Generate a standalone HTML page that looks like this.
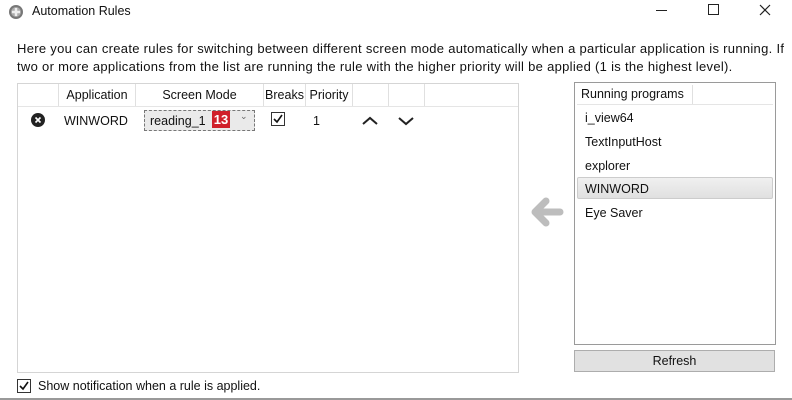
<!DOCTYPE html><html><head><meta charset="utf-8"><style>
body{margin:0;width:792px;height:400px;background:#fff;font-family:"Liberation Sans",sans-serif;font-size:12px;color:#111;position:relative;overflow:hidden}
.a{position:absolute}
.hd{position:absolute;top:0;height:22px;line-height:22px;border-right:1px solid #e0e0e0;text-align:center;font-size:12.5px}
</style></head><body>
<svg class="a" style="left:8px;top:4px" width="16" height="16" viewBox="0 0 16 16"><circle cx="8" cy="8" r="7" fill="#777"/><circle cx="8" cy="8" r="5" fill="#aaa"/><path d="M8 4v8M4 8h8" stroke="#eee" stroke-width="2.5"/></svg>
<div class="a" style="left:32px;top:4px;font-size:12.5px">Automation Rules</div>
<div class="a" style="left:656px;top:10px;width:11px;height:1px;background:#222"></div>
<div class="a" style="left:708px;top:4px;width:9px;height:9px;border:1px solid #222"></div>
<svg class="a" style="left:759px;top:4px" width="12" height="12"><path d="M1 1L11 11M11 1L1 11" stroke="#222" stroke-width="1.2"/></svg>
<div class="a" style="left:17px;top:40px;width:775px;line-height:18px;font-size:13px;letter-spacing:0.3px">Here you can create rules for switching between different screen mode automatically when a particular application is running. If two or more applications from the list are running the rule with the higher priority will be applied (1 is the highest level).</div>
<div class="a" style="left:17px;top:83px;width:500px;height:288px;border:1px solid #d5d5d5;font-size:12.5px">
 <div class="a" style="left:0;top:0;width:500px;height:22px;border-bottom:1px solid #e5e5e5"></div>
 <div class="hd" style="left:0;width:40px"></div>
 <div class="hd" style="left:41px;width:76px">Application</div>
 <div class="hd" style="left:118px;width:127px">Screen Mode</div>
 <div class="hd" style="left:246px;width:41px">Breaks</div>
 <div class="hd" style="left:288px;width:46px">Priority</div>
 <div class="hd" style="left:335px;width:35px"></div>
 <div class="hd" style="left:371px;width:35px"></div>
 <svg class="a" style="left:13px;top:29px" width="14" height="14"><circle cx="7" cy="7" r="7" fill="#222"/><path d="M4.5 4.5l5 5M9.5 4.5l-5 5" stroke="#fff" stroke-width="1.6"/></svg>
 <div class="a" style="left:46px;top:30px">WINWORD</div>
 <div class="a" style="left:126px;top:26px;width:109px;height:19px;border:1px dashed #777;background:#eaeaea"></div>
 <div class="a" style="left:132px;top:30px">reading_1</div>
 <div class="a" style="left:194px;top:27px;width:18px;height:17px;background:#d0202a;color:#fff;font-weight:bold;font-size:13px;line-height:17px;text-align:center">13</div>
 <div class="a" style="left:222px;top:27px;font-size:9px;color:#666">&#8964;</div>
 <div class="a" style="left:253px;top:28px;width:12px;height:12px;border:1px solid #333;background:#fff"></div>
 <svg class="a" style="left:254px;top:29px" width="12" height="12"><path d="M2 6l3 3 5-7" stroke="#111" stroke-width="1.6" fill="none"/></svg>
 <div class="a" style="left:295px;top:30px">1</div>
 <svg class="a" style="left:344px;top:32px" width="16" height="10"><path d="M1 8l7-6 7 6" stroke="#222" stroke-width="2" fill="none"/></svg>
 <svg class="a" style="left:380px;top:32px" width="16" height="10"><path d="M1 2l7 6 7-6" stroke="#222" stroke-width="2" fill="none"/></svg>
</div>
<svg class="a" style="left:528px;top:195px" width="36" height="34"><path d="M32 17H9M18 6L7 17l11 11" stroke="#bdbdbd" stroke-width="7" fill="none" stroke-linecap="round" stroke-linejoin="round"/></svg>
<div class="a" style="left:574px;top:82px;width:200px;height:261px;border:1px solid #9a9a9a;font-size:12.5px">
 <div class="a" style="left:2px;top:2px;width:196px;height:19px;border-bottom:1px solid #e5e5e5"></div>
 <div class="a" style="left:2px;top:2px;width:116px;height:19px;border-right:1px solid #e0e0e0;line-height:19px;padding-left:4px;box-sizing:border-box">Running programs</div>
 <div class="a" style="left:10px;top:28px">i_view64</div>
 <div class="a" style="left:10px;top:52px">TextInputHost</div>
 <div class="a" style="left:10px;top:76px">explorer</div>
 <div class="a" style="left:2px;top:94px;width:194px;height:20px;border:1px solid #ccc;background:linear-gradient(#f0f0f0,#e0e0e0);border-radius:2px"></div>
 <div class="a" style="left:10px;top:99px">WINWORD</div>
 <div class="a" style="left:10px;top:123px">Eye Saver</div>
</div>
<div class="a" style="left:574px;top:350px;width:199px;height:20px;border:1px solid #adadad;background:#e1e1e1;text-align:center;line-height:20px;font-size:12.5px">Refresh</div>
<div class="a" style="left:17px;top:379px;width:12px;height:12px;border:1px solid #333"></div>
<svg class="a" style="left:18px;top:380px" width="12" height="12"><path d="M2 6l3 3 5-7" stroke="#111" stroke-width="1.6" fill="none"/></svg>
<div class="a" style="left:38px;top:379px;font-size:12.5px">Show notification when a rule is applied.</div>
<div class="a" style="left:0;top:398px;width:792px;height:2px;background:#999"></div>
</body></html>
